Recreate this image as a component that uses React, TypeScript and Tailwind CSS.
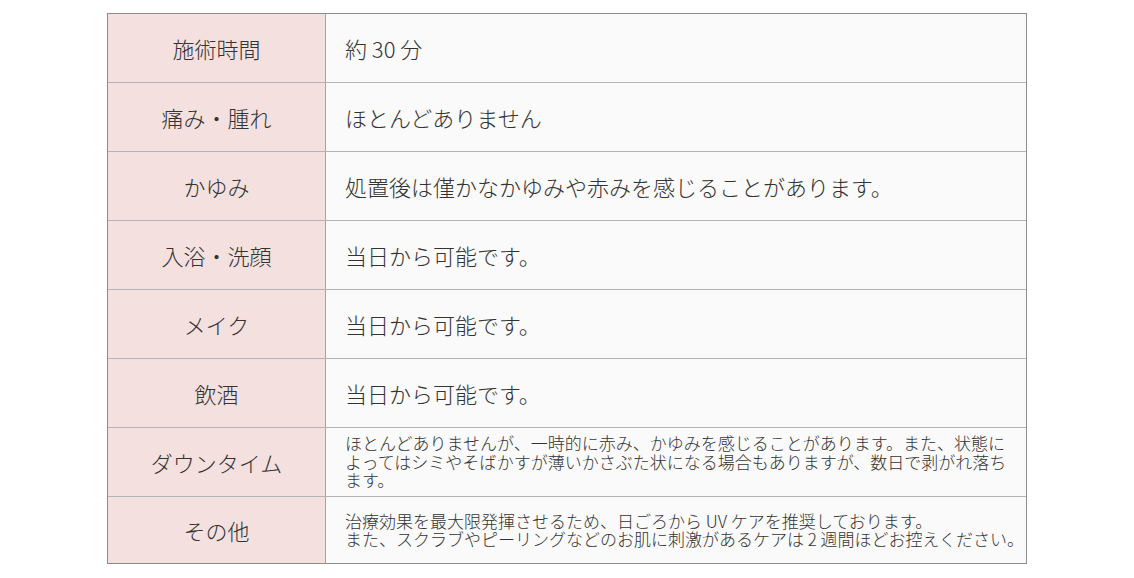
const rows: { label: string; lines: string[]; small?: boolean }[] = [
  { label: "施術時間", lines: ["約 30 分"] },
  { label: "痛み・腫れ", lines: ["ほとんどありません"] },
  { label: "かゆみ", lines: ["処置後は僅かなかゆみや赤みを感じることがあります。"] },
  { label: "入浴・洗顔", lines: ["当日から可能です。"] },
  { label: "メイク", lines: ["当日から可能です。"] },
  { label: "飲酒", lines: ["当日から可能です。"] },
  {
    label: "ダウンタイム",
    small: true,
    lines: [
      "ほとんどありませんが、一時的に赤み、かゆみを感じることがあります。また、状態に",
      "よってはシミやそばかすが薄いかさぶた状になる場合もありますが、数日で剥がれ落ち",
      "ます。",
    ],
  },
  {
    label: "その他",
    small: true,
    lines: [
      "治療効果を最大限発揮させるため、日ごろから UV ケアを推奨しております。",
      "また、スクラブやピーリングなどのお肌に刺激があるケアは 2 週間ほどお控えください。",
    ],
  },
];

export default function App() {
  return (
    <div
      className="min-h-screen bg-white pt-[13px] font-light text-[#333]"
      style={{ fontFamily: '"Noto Sans CJK JP", "Noto Sans", sans-serif' }}
    >
      <div className="mx-auto w-[920px] border border-[#8c8c8c]">
        {rows.map((row, i) => (
          <div
            key={row.label}
            className={`flex ${
              i === 0 ? "h-[68px]" : i === rows.length - 1 ? "h-[67px] border-t border-[#b3b3b3]" : "h-[69px] border-t border-[#b3b3b3]"
            }`}
          >
            <div className="flex w-[218px] shrink-0 items-center justify-center border-r border-[#a3a3a3] bg-[#f4e1df] text-[22px]">
              {row.label}
            </div>
            <div
              className={`flex flex-1 flex-col justify-center bg-[#fafafa] pl-[19px] ${
                row.small ? "text-[17px] leading-[18.5px]" : "text-[22px]"
              }`}
            >
              {row.lines.map((line) => (
                <span key={line} className="whitespace-nowrap">
                  {line}
                </span>
              ))}
            </div>
          </div>
        ))}
      </div>
    </div>
  );
}
